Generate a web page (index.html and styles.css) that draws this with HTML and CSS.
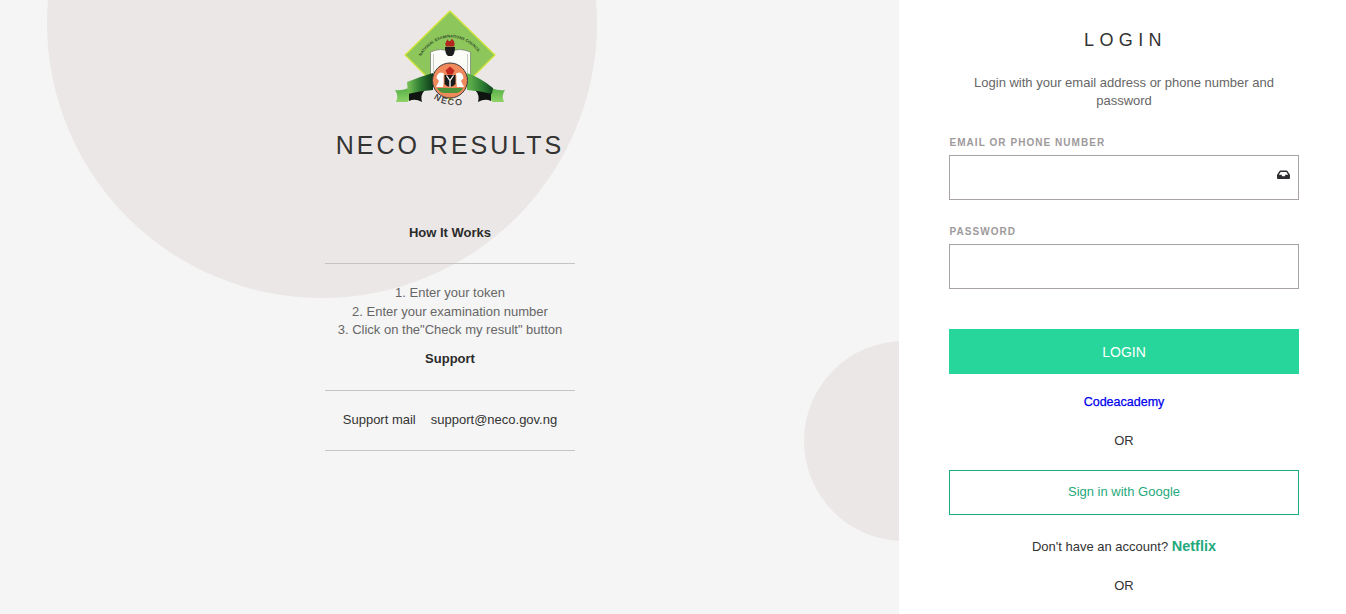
FILE: index.html
```html
<!DOCTYPE html>
<html lang="en">
<head>
<meta charset="utf-8">
<title>NECO Results</title>
<link rel="stylesheet" href="styles.css">
</head>
<body>
<div class="page">
  <main class="info">
    <div class="circle circle-big"></div>
    <div class="circle circle-small"></div>
    <div class="info-inner">
      <svg class="logo" viewBox="0 0 110 98" aria-label="NECO logo">
        <defs>
          <path id="arc" d="M20 60 C26 38 42 27.500 55 27.500 C68 27.500 84 36 90 56"/>
          <path id="arc-neco" d="M37 87 Q50 98 71 94"/>
          <linearGradient id="rib-l" x1="0" x2="1" y1="0" y2="0"><stop offset="0" stop-color="#7cc55a"/><stop offset="0.5" stop-color="#2f7d32"/><stop offset="1" stop-color="#0e3a1a"/></linearGradient>
          <linearGradient id="rib-r" x1="0" x2="1" y1="0" y2="0"><stop offset="0" stop-color="#66b84e"/><stop offset="0.6" stop-color="#2d7d33"/><stop offset="1" stop-color="#11451f"/></linearGradient>
          <linearGradient id="tail" x1="0" x2="0" y1="0" y2="1"><stop offset="0" stop-color="#56b048"/><stop offset="1" stop-color="#8ed266"/></linearGradient>
        </defs>
        <polygon points="55,1 100,45 55,90 10,45" fill="#8dc65a" stroke="#d8e63c" stroke-width="1.3"/>
        <path d="M35.500 68 V42 Q46 37 55 42 Q64 37 75.500 42 V68 Z" fill="#fbfbf8" stroke="#7d8678" stroke-width="0.8"/>
        <path d="M38.500 66 V44 M72.500 66 V44" stroke="#c7ccc3" stroke-width="1"/>
        <path d="M50 37 H60 Q60 44 57 46 H53 Q50 44 50 37 Z" fill="#1c1c1c"/>
        <path d="M51 36.500 Q49 33 53 29 Q53 32 55 31 Q57 30 56.500 28.500 Q61 32 59 36.500 Z" fill="#b3261e"/>
        <path d="M14 82 L30 80 Q25 85 27 92 Q20 88 14 91 Z" fill="#101410"/>
        <path d="M96 82 L80 80 Q85 85 83 92 Q90 88 96 91 Z" fill="#101410"/>
        <path d="M0 80 Q6 81 14 78 L14 90 Q13 92 12 92 L1 92 Q4 86 0 80 Z" fill="url(#tail)"/>
        <path d="M110 80 Q104 81 96 78 L96 90 Q97 92 98 92 L109 92 Q106 86 110 80 Z" fill="url(#tail)"/>
        <path d="M12 72 Q24 67 38 63 V80 Q24 81 13 84 Z" fill="url(#rib-l)"/>
        <path d="M72 63 Q86 68 98 78 L97 84 Q86 81 72 80 Z" fill="url(#rib-r)"/>
        <circle cx="55" cy="70.500" r="17.500" fill="#f08a5c" stroke="#3a3a3a" stroke-width="1"/>
        <path d="M50.500 60.500 L55 56.500 L59.500 60.500 L57.500 64.500 H52.500 Z" fill="#c0271f"/>
        <path d="M49.500 65 H60.500 V74 Q55 80 49.500 74 Z" fill="#1a1a1a"/>
        <path d="M51.500 65.500 L55 70.500 L58.500 65.500 M55 70.500 V77" stroke="#f7f7f2" stroke-width="1.300" fill="none"/>
        <path d="M41 77 L44 71 L41.500 68 Q42 63 46 62.500 L49 63.500 L48.500 67 Q49 72 48 77 Z" fill="#fff"/>
        <path d="M69 77 L66 71 L68.500 68 Q68 63 64 62.500 L61 63.500 L61.500 67 Q61 72 62 77 Z" fill="#fff"/>
        <path d="M42 78 H68 Q66 82 62 83 H48 Q44 82 42 78 Z" fill="#4f9338"/>
        <text class="logo-arc"><textPath href="#arc" startOffset="50%" text-anchor="middle">NATIONAL EXAMINATIONS COUNCIL</textPath></text>
        <text class="logo-neco"><textPath href="#arc-neco" startOffset="50%" text-anchor="middle">NECO</textPath></text>
      </svg>
      <h1 class="brand">NECO RESULTS</h1>
      <h2 class="info-head first">How It Works</h2>
      <hr class="rule">
      <ol class="steps">
        <li class="step-one">1. Enter your token</li>
        <li>2. Enter your examination number</li>
        <li>3. Click on the"Check my result" button</li>
      </ol>
      <h2 class="info-head">Support</h2>
      <hr class="rule rule-support">
      <p class="support"><span>Support mail</span><span>support@neco.gov.ng</span></p>
      <hr class="rule">
    </div>
  </main>
  <aside class="panel">
    <h2 class="title">LOGIN</h2>
    <p class="intro">Login with your email address or phone number and password</p>
    <form class="form">
      <label class="label" for="email">EMAIL OR PHONE NUMBER</label>
      <div class="field">
        <input class="input" id="email" type="text">
        <svg class="field-icon" viewBox="0 0 576 512"><path d="M567.938 243.908L462.25 85.374A48.003 48.003 0 0 0 422.311 64H153.689a48 48 0 0 0-39.938 21.374L8.062 243.908A47.994 47.994 0 0 0 0 270.533V400c0 26.51 21.49 48 48 48h480c26.51 0 48-21.49 48-48V270.533a47.994 47.994 0 0 0-8.062-26.625zM162.252 128h251.497l85.333 128H376l-32 64H232l-32-64H76.918l85.334-128z" fill="#2b2d30"/></svg>
      </div>
      <label class="label label-pass" for="password">PASSWORD</label>
      <div class="field">
        <input class="input" id="password" type="password">
      </div>
      <button class="btn-login" type="button">LOGIN</button>
    </form>
    <a class="link-code" href="#">Codeacademy</a>
    <p class="or or-one">OR</p>
    <button class="btn-google" type="button">Sign in with Google</button>
    <p class="signup">Don't have an account? <a href="#">Netflix</a></p>
    <p class="or or-two">OR</p>
  </aside>
</div>
</body>
</html>
```

FILE: styles.css
```css
* { box-sizing: border-box; }
html, body { margin: 0; height: 100%; overflow: hidden; }
body { font-family: "Liberation Sans", Arial, sans-serif; color: #2b2b2b; font-size: 13px; }
.page { display: flex; height: 614px; overflow: hidden; }

.info { position: relative; flex: 1; background: #f5f5f5; overflow: hidden; display: flex; justify-content: center; }
.circle { position: absolute; border-radius: 50%; background: #ebe7e6; }
.circle-big { width: 550px; height: 550px; left: 47px; top: -252px; }
.circle-small { width: 200px; height: 200px; left: 804px; top: 341px; }
.info-inner { position: relative; width: 250px; margin-left: 1px; display: flex; flex-direction: column; align-items: center; }
.logo { width: 110px; height: 98px; margin-top: 10px; display: block; flex: none; }
.logo-arc { font-size: 3.9px; font-weight: 700; fill: #2e4a2a; }
.logo-neco { font-size: 8.5px; font-weight: 400; fill: #2b2b2b; letter-spacing: 1.8px; stroke: #2b2b2b; stroke-width: 0.2px; }
.brand { margin: 22px -20px 0; font-size: 25px; line-height: 30px; font-weight: 400; letter-spacing: 3px; color: #333; white-space: nowrap; }
.info-head { margin: 0; font-size: 13px; line-height: 18px; font-weight: 700; color: #2b2b2b; text-align: center; }
.info-head.first { margin-top: 64px; }
.rule { width: 100%; margin: 21px 0 0; border: 0; border-top: 1px solid #c4c4c4; height: 1px; flex: none; }
.steps { list-style: none; margin: 20px -10px 0; padding: 0; text-align: center; color: #666; line-height: 18px; white-space: nowrap; }
.step-one { margin-bottom: 1px; }
.info-head:not(.first) { margin-top: 11px; }
.rule-support { margin-top: 22px; }
.support { margin: 20px 0 0; display: flex; gap: 15px; line-height: 18px; color: #333; white-space: nowrap; }
.support + .rule { margin-top: 21px; }

.panel { width: 447px; flex: none; background: #fff; padding: 0 47px 0 50px; display: flex; flex-direction: column; align-items: center; }
.title { margin: 29px 0 0; font-size: 18px; line-height: 22px; font-weight: 400; letter-spacing: 5.4px; color: #333; text-indent: 3px; }
.intro { margin: 23px 0 0; line-height: 18px; color: #666; text-align: center; width: 330px; }
.form { width: 350px; margin-top: 27px; display: flex; flex-direction: column; }
.label { font-size: 10px; line-height: 12px; font-weight: 700; letter-spacing: 1.05px; color: #9e9a9c; padding-left: 0.5px; }
.label-pass { margin-top: 26px; }
.field { position: relative; margin-top: 6px; }
.input { display: block; width: 350px; height: 45px; border: 1px solid #a8a2a5; background: #fff; outline: 0; border-radius: 0; padding: 0 12px; }
.field-icon { position: absolute; right: 9px; top: 14px; width: 13px; height: 11.5px; }
.btn-login { margin-top: 40px; width: 350px; height: 45px; border: 0; border-radius: 0; background: #26d69a; color: #fff; font: 400 14px "Liberation Sans", Arial, sans-serif; }
.link-code { margin-top: 19px; font-size: 12.5px; line-height: 18px; color: #0000ee; text-decoration: none; -webkit-text-stroke: 0.25px #0000ee; }
.or { margin: 0; line-height: 18px; color: #333; }
.or-one { margin-top: 21px; }
.btn-google { margin-top: 20px; width: 350px; height: 45px; background: #fff; border: 1px solid #1fa97c; border-radius: 0; color: #1fa97c; padding: 0 0 3px; font: 400 13px "Liberation Sans", Arial, sans-serif; flex: none; }
.signup { margin: 22px 0 0; line-height: 18px; color: #333; }
.signup a { font-size: 14.5px; font-weight: 700; color: #1fa97c; text-decoration: none; }
.or-two { margin-top: 21px; }
```
